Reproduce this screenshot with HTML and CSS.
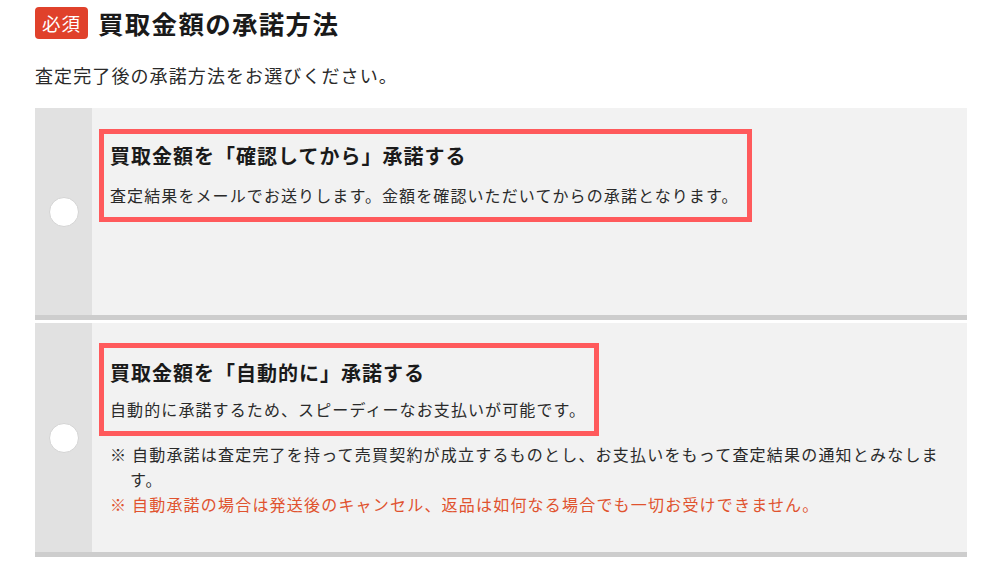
FILE: index.html
```html
<!DOCTYPE html>
<html lang="ja">
<head>
<meta charset="utf-8">
<title>買取金額の承諾方法</title>
<link rel="stylesheet" href="styles.css">
</head>
<body>
<div class="page">
  <div class="heading">
    <span class="badge">必須</span>
    <h1 class="heading-title">買取金額の承諾方法</h1>
  </div>
  <p class="lead">査定完了後の承諾方法をお選びください。</p>

  <div class="options">
    <label class="option option-first">
      <span class="option-side"><span class="radio"></span></span>
      <span class="option-body">
        <span class="highlight">
          <span class="option-title">買取金額を「確認してから」承諾する</span>
          <span class="option-desc">査定結果をメールでお送りします。金額を確認いただいてからの承諾となります。</span>
        </span>
      </span>
    </label>

    <label class="option option-second">
      <span class="option-side"><span class="radio"></span></span>
      <span class="option-body">
        <span class="highlight">
          <span class="option-title">買取金額を「自動的に」承諾する</span>
          <span class="option-desc">自動的に承諾するため、スピーディーなお支払いが可能です。</span>
        </span>
        <span class="note note-first">※ 自動承諾は査定完了を持って売買契約が成立するものとし、お支払いをもって査定結果の通知とみなします。</span>
        <span class="note note-warn">※ 自動承諾の場合は発送後のキャンセル、返品は如何なる場合でも一切お受けできません。</span>
      </span>
    </label>
  </div>
</div>
</body>
</html>
```

FILE: styles.css
```css
* {
  box-sizing: border-box;
}

html, body {
  margin: 0;
  padding: 0;
  background: #ffffff;
}

body {
  font-family: "Noto Sans CJK JP", "Noto Sans", sans-serif;
  color: #222222;
}

.page {
  width: 967px;
  padding: 7px 0 0 35px;
}

.heading {
  display: flex;
  align-items: center;
  gap: 10px;
  height: 32px;
}

.badge {
  display: flex;
  align-items: center;
  justify-content: center;
  width: 53px;
  height: 32px;
  background: #e0412b;
  color: #ffffff;
  border-radius: 4px;
  font-size: 18.5px;
  letter-spacing: 1px;
  line-height: 1;
}

.heading-title {
  margin: 0;
  font-size: 25.5px;
  font-weight: 700;
  letter-spacing: 1.3px;
  line-height: 32px;
  color: #1a1a1a;
}

.lead {
  margin: 22px 0 19px;
  font-size: 18px;
  letter-spacing: 1.1px;
  line-height: 28px;
  color: #2a2a2a;
}

.options {
  display: flex;
  flex-direction: column;
  gap: 3px;
}

.option {
  display: flex;
  background: #f2f2f2;
  border-bottom: 5px solid #cdcdcd;
  cursor: pointer;
}

.option-first {
  min-height: 212px;
}

.option-side {
  flex: 0 0 57px;
  display: flex;
  align-items: center;
  justify-content: center;
  background: #e1e1e1;
}

.radio {
  width: 30px;
  height: 30px;
  border-radius: 50%;
  background: #ffffff;
  border: 1px solid #d4d4d4;
}

.option-body {
  flex: 1;
  display: flex;
  flex-direction: column;
  align-items: flex-start;
  padding: 21px 20px 35px 7px;
}

.option-second .option-body {
  padding-top: 20px;
}

.highlight {
  display: flex;
  flex-direction: column;
  border: 5px solid #ff5a5c;
  padding: 7px 8px 9px 6px;
}

.option-second .highlight {
  padding-top: 10px;
}

.option-title {
  font-size: 20px;
  font-weight: 700;
  letter-spacing: 1px;
  line-height: 30px;
  color: #1a1a1a;
}

.option-desc {
  margin-top: 11px;
  font-size: 16px;
  letter-spacing: 1.1px;
  line-height: 26px;
  color: #2a2a2a;
}

.option-second .option-desc {
  margin-top: 8px;
}

.note {
  display: block;
  margin-left: 11px;
  padding-left: 20px;
  text-indent: -20px;
  font-size: 16px;
  letter-spacing: 1.2px;
  line-height: 25px;
  color: #2a2a2a;
}

.note-first {
  margin-top: 6px;
}

.note-warn {
  color: #e0532f;
}
```
